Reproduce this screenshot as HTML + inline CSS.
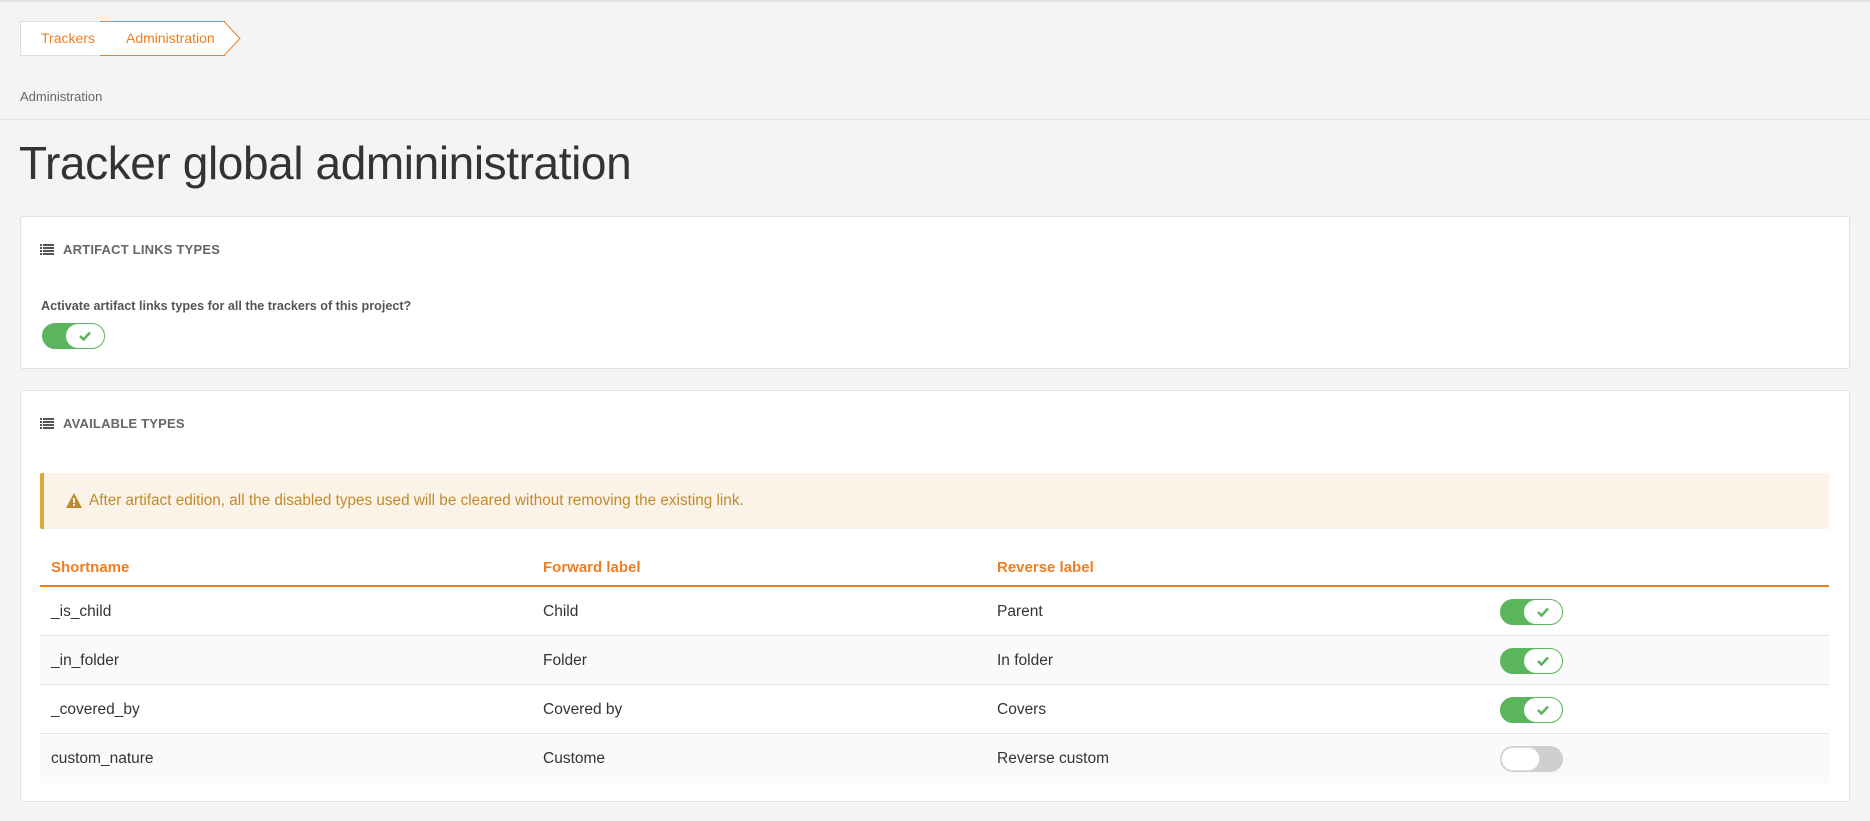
<!DOCTYPE html>
<html><head><meta charset="utf-8"><style>
*{box-sizing:border-box;margin:0;padding:0}
body{width:1870px;height:821px;background:#f4f4f4;font-family:"Liberation Sans",sans-serif;color:#333;position:relative;overflow:hidden;border-top:2px solid #e3e3e3}
.abs{position:absolute}
.bc1{left:20px;top:19px;width:82px;height:35px;background:#fff;border:1px solid #ddd;border-right:none;color:#f07e1e;font-size:14px;line-height:33px;padding-left:20px}
.bc2{left:100px;top:19px;height:35px;width:125px;border-top:1px solid #f07e1e;border-bottom:1px solid #f07e1e;background:#fff;color:#f07e1e;font-size:14px;line-height:33px;padding-left:26px}
.card{left:20px;width:1830px;background:#fff;border:1px solid #e1e1e1;border-radius:3px}
.h{font-size:13px;color:#666;letter-spacing:.2px;font-weight:bold}
.ico{display:inline-block;width:14px;height:11px;vertical-align:-1px;margin-right:9px}
.tog{position:absolute;width:63px;height:26px;border-radius:13px;background:#5bb55d;border:1px solid #5bb55d}
.tog .k{position:absolute;right:0;top:0;width:38px;height:24px;border-radius:12px;background:#fff}
.tog .k svg{position:absolute;left:13px;top:7px}
.off{background:#cfcfcf;border-color:#cfcfcf}
.off .k{left:0;right:auto;width:39px;border:1px solid #ddd;height:24px}
.row{position:absolute;left:40px;width:1789px;height:49px;border-bottom:1px solid #e3e3e8;font-size:15.5px;line-height:49px}
.row span{position:absolute}
.alt{background:#fafafa}
</style></head><body>
<div class="abs bc1">Trackers</div>
<svg class="abs" style="left:99px;top:19px" width="20" height="35"><polygon points="0,0 2,0 19,17.5 2,35 0,35" fill="#fff"/><polyline points="1,0 19,17.5 1,35" fill="none" stroke="#ddd"/></svg>
<div class="abs bc2">Administration</div>
<svg class="abs" style="left:224px;top:19px" width="18" height="35"><polygon points="0,0.5 0,34.5 16,17.5" fill="#fff"/><polyline points="0,0.5 16,17.5 0,34.5" fill="none" stroke="#f07e1e"/></svg>
<div class="abs" style="left:20px;top:87px;font-size:13px;color:#666">Administration</div>
<div class="abs" style="left:0;top:117px;width:1870px;height:1px;background:#e3e3e3"></div>
<div class="abs" style="left:19px;top:134px;font-size:46px;color:#333;letter-spacing:-0.4px">Tracker global admininistration</div>

<div class="abs card" style="top:214px;height:153px"></div>
<div class="abs h" style="left:40px;top:240px"><svg class="ico" viewBox="0 0 14 11"><g fill="#555"><rect x="0" y="0" width="2" height="2"/><rect x="3" y="0" width="11" height="2"/><rect x="0" y="3" width="2" height="2"/><rect x="3" y="3" width="11" height="2"/><rect x="0" y="6" width="2" height="2"/><rect x="3" y="6" width="11" height="2"/><rect x="0" y="9" width="2" height="2"/><rect x="3" y="9" width="11" height="2"/></g></svg>ARTIFACT LINKS TYPES</div>
<div class="abs" style="left:41px;top:297px;font-size:12.6px;font-weight:bold;color:#555">Activate artifact links types for all the trackers of this project?</div>
<div class="tog" style="left:42px;top:321px"><div class="k"><svg width="12" height="10" viewBox="0 0 12 10"><path d="M1 5 L4.5 8.5 L11 1.5" stroke="#5bb55d" stroke-width="2.6" fill="none"/></svg></div></div>

<div class="abs card" style="top:388px;height:412px"></div>
<div class="abs h" style="left:40px;top:414px"><svg class="ico" viewBox="0 0 14 11"><g fill="#555"><rect x="0" y="0" width="2" height="2"/><rect x="3" y="0" width="11" height="2"/><rect x="0" y="3" width="2" height="2"/><rect x="3" y="3" width="11" height="2"/><rect x="0" y="6" width="2" height="2"/><rect x="3" y="6" width="11" height="2"/><rect x="0" y="9" width="2" height="2"/><rect x="3" y="9" width="11" height="2"/></g></svg>AVAILABLE TYPES</div>
<div class="abs" style="left:40px;top:471px;width:1789px;height:56px;background:#fcf3e8;border-left:4px solid #e0a63a;border-radius:2px"></div>
<svg class="abs" style="left:66px;top:491px" width="16" height="15" viewBox="0 0 16 15"><polygon points="8,0 16,15 0,15" fill="#c08a2c"/><rect x="7" y="5" width="2" height="5" fill="#fcf3e8"/><rect x="7" y="11" width="2" height="2" fill="#fcf3e8"/></svg>
<div class="abs" style="left:89px;top:490px;font-size:15.3px;color:#c08a2c">After artifact edition, all the disabled types used will be cleared without removing the existing link.</div>
<div class="abs" style="left:51px;top:557px;font-size:15px;font-weight:bold;color:#f07e1e">Shortname</div>
<div class="abs" style="left:543px;top:557px;font-size:15px;font-weight:bold;color:#f07e1e">Forward label</div>
<div class="abs" style="left:997px;top:557px;font-size:15px;font-weight:bold;color:#f07e1e">Reverse label</div>
<div class="abs" style="left:40px;top:583px;width:1789px;height:2px;background:#f07e1e"></div>
<div class="row" style="top:585px"><span style="left:11px">_is_child</span><span style="left:503px">Child</span><span style="left:957px">Parent</span></div>
<div class="row alt" style="top:634px"><span style="left:11px">_in_folder</span><span style="left:503px">Folder</span><span style="left:957px">In folder</span></div>
<div class="row" style="top:683px"><span style="left:11px">_covered_by</span><span style="left:503px">Covered by</span><span style="left:957px">Covers</span></div>
<div class="row alt" style="top:732px;border-bottom:none"><span style="left:11px">custom_nature</span><span style="left:503px">Custome</span><span style="left:957px">Reverse custom</span></div>
<div class="tog" style="left:1500px;top:597px"><div class="k"><svg width="12" height="10" viewBox="0 0 12 10"><path d="M1 5 L4.5 8.5 L11 1.5" stroke="#5bb55d" stroke-width="2.6" fill="none"/></svg></div></div>
<div class="tog" style="left:1500px;top:646px"><div class="k"><svg width="12" height="10" viewBox="0 0 12 10"><path d="M1 5 L4.5 8.5 L11 1.5" stroke="#5bb55d" stroke-width="2.6" fill="none"/></svg></div></div>
<div class="tog" style="left:1500px;top:695px"><div class="k"><svg width="12" height="10" viewBox="0 0 12 10"><path d="M1 5 L4.5 8.5 L11 1.5" stroke="#5bb55d" stroke-width="2.6" fill="none"/></svg></div></div>
<div class="tog off" style="left:1500px;top:744px"><div class="k"></div></div>
</body></html>
